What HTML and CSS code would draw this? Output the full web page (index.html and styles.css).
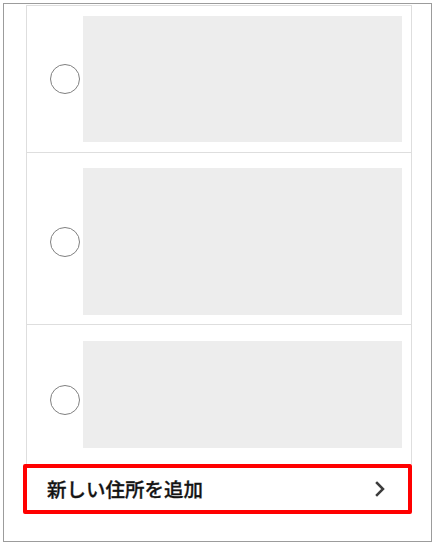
FILE: index.html
```html
<!DOCTYPE html>
<html lang="ja">
<head>
    <meta charset="UTF-8">
    <meta name="viewport" content="width=device-width, initial-scale=1.0">
    <title>住所の選択</title>
    <link rel="stylesheet" href="styles.css">
</head>
<body>

    <div class="frame">
        <div class="address-list">
            <label class="address-row row-a">
                <span class="radio"></span>
                <span class="placeholder"></span>
            </label>
            <label class="address-row row-b">
                <span class="radio"></span>
                <span class="placeholder"></span>
            </label>
            <label class="address-row row-c">
                <span class="radio"></span>
                <span class="placeholder"></span>
            </label>
        </div>

        <a class="add-address" href="#">
            <span class="add-label">新しい住所を追加</span>
            <svg class="chevron" width="10" height="16" viewBox="0 0 10 16">
                <path d="M2 2 L8 8 L2 14" fill="none" stroke="#3c3c3c" stroke-width="2.5" stroke-linecap="square"/>
            </svg>
        </a>
    </div>

</body>
</html>
```

FILE: styles.css
```css
body {
    margin: 0;
    background-color: #fff;
    font-family: "Noto Sans CJK JP", "Noto Sans", sans-serif;
}

.frame {
    box-sizing: border-box;
    width: 429px;
    height: 539px;
    margin: 3px;
    border: 1px solid #9c9c9c;
    padding: 1px 19px 0 22px;
}

.address-list {
    border: 1px solid #dedede;
    border-bottom: none;
}

.address-row {
    display: flex;
    align-items: center;
    padding: 10px 9px 10px 23px;
    border-bottom: 1px solid #dedede;
    cursor: pointer;
}

.radio {
    flex: none;
    box-sizing: border-box;
    width: 30px;
    height: 30px;
    margin-right: 3px;
    border: 1.3px solid #808080;
    border-radius: 50%;
}

.placeholder {
    flex: 1;
    background-color: #ededed;
}

.row-a .placeholder {
    height: 126px;
}

.row-b {
    padding-top: 15px;
    padding-bottom: 9px;
}

.row-b .placeholder {
    height: 147px;
}

.row-c {
    padding-top: 16px;
    padding-bottom: 16px;
    border-bottom: none;
}

.row-c .placeholder {
    height: 107px;
}

.row-c .radio {
    margin-top: 11px;
}

.add-address {
    display: flex;
    align-items: center;
    justify-content: space-between;
    box-sizing: border-box;
    width: 389px;
    height: 50px;
    margin-left: -3px;
    padding: 0 23px 0 20px;
    border: 4px solid #ff0000;
    border-radius: 2px;
    color: #141414;
    text-decoration: none;
}

.add-label {
    font-size: 19.5px;
    font-weight: 500;
    line-height: 1;
    -webkit-text-stroke: 0.3px #141414;
}

.chevron {
    display: block;
}
```
